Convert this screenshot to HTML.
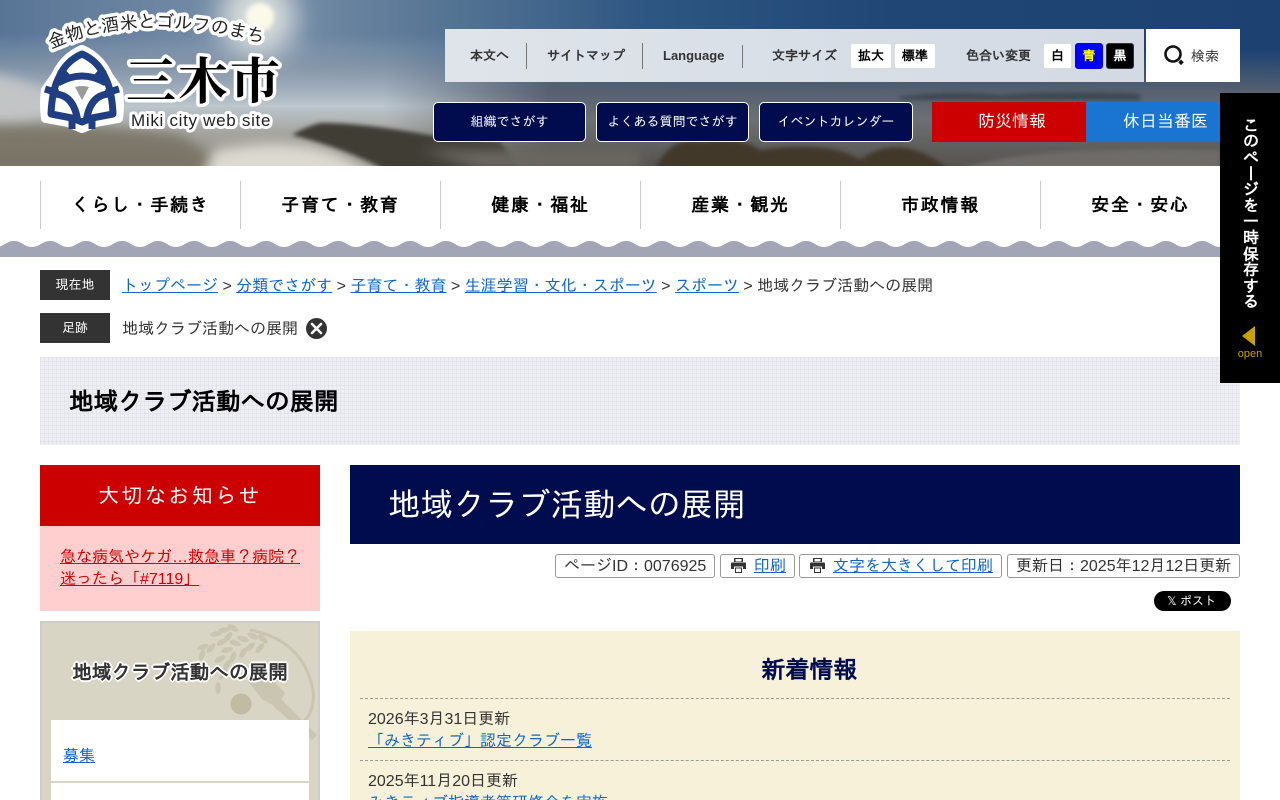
<!DOCTYPE html>
<html lang="ja">
<head>
<meta charset="utf-8">
<title>地域クラブ活動への展開 - 三木市</title>
<style>
*{box-sizing:border-box;margin:0;padding:0}
html,body{width:1280px;height:800px;overflow:hidden;background:#fff}
body{position:relative;font-family:"Liberation Sans","IPAGothic","Noto Sans CJK JP",sans-serif;font-size:16px;color:#333}
a{color:#0f66c8}
.a{position:absolute;white-space:nowrap}
.tb{position:absolute;font-size:13px;font-weight:bold;color:#333;white-space:nowrap;line-height:20px;top:46px}
.sep{position:absolute;top:43px;height:26px;width:1px;background:#777}
.sb{position:absolute;top:43px;height:26px;background:#fff;border:1px solid #ddd;border-radius:3px;font-size:13px;font-weight:bold;color:#000;text-align:center;line-height:24px}
.nb{position:absolute;top:102px;height:40px;background:#000c4e;border:1px solid #fff;border-radius:5px;color:#fff;font-size:13px;text-align:center;line-height:38px}
.nav{position:absolute;top:181px;width:200px;height:48px;border-left:1px solid #ccc;text-align:center;font-size:18px;font-weight:bold;color:#000;line-height:48px;letter-spacing:1.700px}
.lab{position:absolute;left:40px;width:70px;height:30px;background:#333;color:#fff;font-size:13px;text-align:center;line-height:30px}
.info{position:absolute;top:554px;height:24px;border:1px solid #999;border-radius:3px;background:#fff;line-height:24px;white-space:nowrap;font-size:16px}
.dash{position:absolute;left:360px;width:870px;border-top:1px dashed #999}
</style>
</head>
<body>
<svg class="a" style="left:0;top:0" width="1280" height="166" viewBox="0 0 1280 166">
<defs>
<linearGradient id="sky" x1="0" y1="0" x2="1" y2="0">
<stop offset="0" stop-color="#587596"/><stop offset=".2" stop-color="#7a8fa9"/><stop offset=".33" stop-color="#5a7896"/><stop offset=".5" stop-color="#2f5783"/><stop offset=".7" stop-color="#1f4675"/><stop offset="1" stop-color="#1d4272"/>
</linearGradient>
<linearGradient id="vl" x1="0" y1="0" x2="0" y2="1">
<stop offset=".2" stop-color="#9aa9b9" stop-opacity="0"/><stop offset=".5" stop-color="#a3b2c2" stop-opacity=".85"/><stop offset=".64" stop-color="#bcc6cd"/><stop offset=".8" stop-color="#a5a5a0"/><stop offset="1" stop-color="#8f8d84"/>
</linearGradient>
<linearGradient id="vr" x1="0" y1="0" x2="0" y2="1">
<stop offset=".3" stop-color="#55606e" stop-opacity="0"/><stop offset=".55" stop-color="#566070"/><stop offset=".72" stop-color="#6c7074"/><stop offset="1" stop-color="#55534e"/>
</linearGradient>
<linearGradient id="mg" x1="0" y1="0" x2="1" y2="0">
<stop offset=".3" stop-color="#fff"/><stop offset=".43" stop-color="#000"/>
</linearGradient>
<mask id="ml"><rect width="1280" height="166" fill="url(#mg)"/></mask>
<filter id="b1" x="-30%" y="-100%" width="160%" height="300%"><feGaussianBlur stdDeviation="6"/></filter>
<filter id="b2" x="-30%" y="-100%" width="160%" height="300%"><feGaussianBlur stdDeviation="2"/></filter>
<filter id="b3" x="-100%" y="-100%" width="300%" height="300%"><feGaussianBlur stdDeviation="14"/></filter>
</defs>
<rect width="1280" height="166" fill="url(#sky)"/>
<rect width="1280" height="166" fill="url(#vr)"/>
<rect width="1280" height="166" fill="url(#vl)" mask="url(#ml)"/>
<circle cx="258" cy="18" r="38" fill="#e4e7e2" opacity=".9" filter="url(#b3)"/>
<circle cx="260" cy="17" r="14" fill="#fbf9e8" filter="url(#b2)"/>
<path d="M-20 72 Q30 78 70 105 L20 125 H-20Z" fill="#c2c5c6" filter="url(#b1)"/>
<path d="M-20 125 Q80 120 180 135 Q210 150 225 180 H-20Z" fill="#746e5e" opacity=".8" filter="url(#b1)"/>
<path d="M215 150 Q290 135 340 155 L390 180 H200Z" fill="#dcdad0" filter="url(#b1)"/>
<path d="M292 135 Q305 127 320 123 Q360 122 440 137 L500 142 L520 170 H385 Q350 150 292 135Z" fill="#3f3c36" filter="url(#b2)"/>
<path d="M420 150 L640 150 V170 H480Z" fill="#6a6860" filter="url(#b1)"/>
<path d="M655 170 Q670 135 700 142 Q740 135 760 150 Q830 140 860 160 Q900 130 950 170Z" fill="#43392a" filter="url(#b2)"/>
<path d="M960 170 Q1020 145 1220 150 V170Z" fill="#6e6c68" filter="url(#b2)"/>
<path d="M900 97 Q950 90 1000 95 Q1060 90 1140 94 L1140 100 H900Z" fill="#3d4650" filter="url(#b2)"/>

<!-- emblem -->
<path d="M82 50 Q100 58 108 76 L118 90 Q120 104 118 118 L96 122 L82 128 L68 122 L46 118 Q44 104 46 90 L56 76 Q64 58 82 50Z" fill="#fff" stroke="#fff" stroke-width="10" stroke-linejoin="round"/>
<g fill="none" stroke="#1f3f82" stroke-width="7" stroke-linejoin="round">
<path d="M82 54 Q98 61 105 77 Q112 90 113 114 L92 118 L82 122 L72 118 L51 114 Q52 90 59 77 Q66 61 82 54Z"/>
<path d="M58 83 Q82 69 106 83"/>
<path d="M54 94 Q74 94 78 122"/>
<path d="M110 94 Q90 94 86 122"/>
<path d="M60 69 L68 78M104 69 L96 78M45 89 L58 93M119 89 L106 93M72 118 V129M92 118 V129"/>
</g>
<path fill="#9a9a9a" d="M75 87 Q82 85 89 87 L82 100Z"/>

<!-- logo text -->
<defs><path id="tag" d="M51 49 Q105 25 165 28 Q222 30 270 46"/></defs>
<text font-family="'IPAGothic','Noto Sans CJK JP',sans-serif" font-size="18" fill="#222" stroke="#fff" stroke-width="7" stroke-linejoin="round" paint-order="stroke"><textPath href="#tag">金物と酒米とゴルフのまち</textPath></text>
<text x="126" y="99" font-family="'Noto Serif CJK SC',serif" font-weight="700" font-size="50" letter-spacing="2" fill="#000" stroke="#fff" stroke-width="7" stroke-linejoin="round" paint-order="stroke">三木市</text>
<text x="131" y="126" font-family="'Liberation Sans',sans-serif" font-size="17" letter-spacing=".7" fill="#222" stroke="#fff" stroke-width="6" stroke-linejoin="round" paint-order="stroke">Miki city web site</text>
</svg>

<div class="a" style="left:445px;top:29px;width:699px;height:53px;background:linear-gradient(90deg,#dfe4ea,#d3dae4)"></div>
<div class="a" style="left:1146px;top:29px;width:94px;height:53px;background:#fff"></div>
<span class="tb" style="left:470px">本文へ</span><i class="sep" style="left:526px"></i>
<span class="tb" style="left:547px">サイトマップ</span><i class="sep" style="left:642px"></i>
<span class="tb" style="left:663px">Language</span><i class="sep" style="left:742px;top:45px;height:23px"></i>
<span class="tb" style="left:772px">文字サイズ</span>
<span class="sb" style="left:850px;width:42px">拡大</span>
<span class="sb" style="left:894px;width:42px">標準</span>
<span class="tb" style="left:966px">色合い変更</span>
<span class="sb" style="left:1043px;width:29px">白</span>
<span class="sb" style="left:1075px;width:28px;background:#00f;color:#ff0;border-color:#00f">青</span>
<span class="sb" style="left:1106px;width:28px;background:#000;color:#fff;border-color:#333">黒</span>
<svg class="a" style="left:1162px;top:44px" width="24" height="24" viewBox="0 0 24 24"><circle cx="11" cy="10" r="7.500" fill="none" stroke="#111" stroke-width="2.600"/><path d="M19 15.500l2.800 2.800-2.800 2.800-2.800-2.800z" fill="#111"/></svg>
<span class="a" style="left:1191px;top:46px;font-size:14px;line-height:20px;color:#333">検索</span>

<div class="nb" style="left:433px;width:153px">組織でさがす</div>
<div class="nb" style="left:596px;width:153px">よくある質問でさがす</div>
<div class="nb" style="left:759px;width:154px">イベントカレンダー</div>
<div class="a" style="left:932px;top:102px;width:154px;height:40px;background:#cc0000;color:#fff;font-size:17px;line-height:40px;padding-left:46px">防災情報</div>
<div class="a" style="left:1086px;top:102px;width:154px;height:40px;background:#1a75d2;color:#fff;font-size:17px;line-height:40px;padding-left:37px">休日当番医</div>

<div class="nav" style="left:40px">くらし・手続き</div>
<div class="nav" style="left:240px">子育て・教育</div>
<div class="nav" style="left:440px">健康・福祉</div>
<div class="nav" style="left:640px">産業・観光</div>
<div class="nav" style="left:840px">市政情報</div>
<div class="nav" style="left:1040px">安全・安心</div>

<svg class="a" style="left:0;top:240px" width="1280" height="17" viewBox="0 0 1280 17"><defs><pattern id="w" x="-4" y="0" width="36" height="17" patternUnits="userSpaceOnUse"><path fill="#a2a5b5" d="M0 7 C8 7 10 1 18 1 C26 1 28 7 36 7 V17 H0Z"/></pattern></defs><rect width="1280" height="17" fill="url(#w)"/></svg>

<div class="lab" style="top:270px">現在地</div>
<div class="a" style="left:122px;top:276px;line-height:22px"><a href="#">トップページ</a> &gt; <a href="#">分類でさがす</a> &gt; <a href="#">子育て・教育</a> &gt; <a href="#">生涯学習・文化・スポーツ</a> &gt; <a href="#">スポーツ</a> &gt; 地域クラブ活動への展開</div>
<div class="lab" style="top:313px">足跡</div>
<div class="a" style="left:122px;top:319px;line-height:22px">地域クラブ活動への展開</div>
<svg class="a" style="left:306px;top:318px" width="21" height="21" viewBox="0 0 21 21"><circle cx="10.500" cy="10.500" r="10.500" fill="#333"/><path d="M6 6l9 9M15 6l-9 9" stroke="#fff" stroke-width="2.600" stroke-linecap="round"/></svg>

<div class="a" style="left:40px;top:357px;width:1200px;height:88px;background-color:#eeeef3;background-image:linear-gradient(#e4e4ec 1px,transparent 1px),linear-gradient(90deg,#e4e4ec 1px,transparent 1px);background-size:4px 4px"></div>
<div class="a" style="left:69px;top:386px;font-size:24.500px;font-weight:bold;color:#000;line-height:34px">地域クラブ活動への展開</div>

<div class="a" style="left:40px;top:465px;width:280px;height:61px;background:#cc0000;color:#fff;font-size:21px;text-align:center;line-height:63px;letter-spacing:2.400px">大切なお知らせ</div>
<div class="a" style="left:40px;top:526px;width:280px;height:85px;background:#ffcfcf;padding:21px 20px 0;line-height:22px;white-space:normal"><a href="#" style="color:#cc0000">急な病気やケガ…救急車？病院？迷ったら「#7119」</a></div>

<div class="a" style="left:40px;top:621px;width:280px;height:179px;background:#d8d5c5;border:2px solid #ccc;border-bottom:0;overflow:hidden">
<svg class="a" style="left:-1px;top:-1px" width="280" height="179" viewBox="0 0 280 179"><g fill="#c9c5b1">
<path d="M209 8 Q262 18 272 68 Q274 90 262 100" fill="none" stroke="#c9c5b1" stroke-width="3"/>
<ellipse cx="192" cy="6" rx="6" ry="2.700" transform="rotate(30 192 6)"/><ellipse cx="183" cy="8" rx="6" ry="2.700" transform="rotate(-10 183 8)"/><ellipse cx="175" cy="12" rx="6" ry="2.700" transform="rotate(-10 175 12)"/><ellipse cx="187" cy="15" rx="6" ry="2.700" transform="rotate(-50 187 15)"/><ellipse cx="212" cy="14" rx="6" ry="2.700" transform="rotate(25 212 14)"/><ellipse cx="222" cy="17" rx="6" ry="2.700" transform="rotate(45 222 17)"/><ellipse cx="202" cy="17" rx="6" ry="2.700" transform="rotate(20 202 17)"/><ellipse cx="194" cy="21" rx="6" ry="2.700" transform="rotate(20 194 21)"/><ellipse cx="181" cy="20" rx="6" ry="2.700" transform="rotate(-30 181 20)"/><ellipse cx="162" cy="25" rx="6" ry="2.700" transform="rotate(-20 162 25)"/><ellipse cx="170" cy="26" rx="6" ry="2.700" transform="rotate(-50 170 26)"/><ellipse cx="186" cy="28" rx="6" ry="2.700" transform="rotate(-10 186 28)"/><ellipse cx="209" cy="25" rx="6" ry="2.700" transform="rotate(-40 209 25)"/><ellipse cx="219" cy="26" rx="6" ry="2.700" transform="rotate(-50 219 26)"/><ellipse cx="161" cy="33" rx="6" ry="2.700" transform="rotate(-70 161 33)"/><ellipse cx="179" cy="37" rx="6" ry="2.700" transform="rotate(-30 179 37)"/><ellipse cx="192" cy="35" rx="6" ry="2.700" transform="rotate(-70 192 35)"/><ellipse cx="202" cy="31" rx="6" ry="2.700" transform="rotate(-60 202 31)"/><ellipse cx="186" cy="43" rx="6" ry="2.700" transform="rotate(-60 186 43)"/><ellipse cx="177" cy="66" rx="2.700" ry="6"/><ellipse cx="182" cy="52" rx="2.700" ry="6" transform="rotate(30 182 52)"/>
<path d="M207 60 L229 56 L244 71 L236 85 L222 78Z"/><path d="M239 76 L276 113 L271 118 L232 84Z"/></g>
<circle cx="200" cy="82" r="10.500" fill="#bfbba5"/></svg>
<div class="a" style="left:-1px;top:37px;width:278px;text-align:center;font-size:19.600px;font-weight:bold;color:#333;line-height:26px;text-shadow:-2px 0 0 #fff,2px 0 0 #fff,0 -2px 0 #fff,0 2px 0 #fff,-1px -1px 0 #fff,1px 1px 0 #fff,-1px 1px 0 #fff,1px -1px 0 #fff">地域クラブ活動への展開</div>
<div class="a" style="left:9px;top:97px;width:258px;height:61px;background:#fff;padding:26px 12px 0;line-height:22px"><a href="#">募集</a></div>
<div class="a" style="left:9px;top:160px;width:258px;height:40px;background:#fff"></div>
</div>

<div class="a" style="left:350px;top:465px;width:890px;height:79px;background:#000c4e;color:#fff;font-size:32.500px;line-height:81px;padding-left:38px">地域クラブ活動への展開</div>

<div class="info" style="left:555px;width:160px;padding-left:8px">ページID：0076925</div>
<div class="info" style="left:720px;width:75px;padding-left:33px"><a href="#">印刷</a></div>
<div class="info" style="left:799px;width:203px;padding-left:33px"><a href="#">文字を大きくして印刷</a></div>
<div class="info" style="left:1007px;width:233px;padding-left:8px">更新日：2025年12月12日更新</div>
<svg class="a" style="left:730px;top:557px" width="17" height="17" viewBox="0 0 17 17"><path fill="#333" d="M4 1h9v4H4zM2 5.500h13a1 1 0 0 1 1 1V12h-3V9.500H4V12H1V6.500a1 1 0 0 1 1-1zM5 10.500h7V16H5z"/><path fill="#fff" d="M5.500 2h6v2.500h-6zM6 11.500h5V15H6z"/></svg>
<svg class="a" style="left:809px;top:557px" width="17" height="17" viewBox="0 0 17 17"><path fill="#333" d="M4 1h9v4H4zM2 5.500h13a1 1 0 0 1 1 1V12h-3V9.500H4V12H1V6.500a1 1 0 0 1 1-1zM5 10.500h7V16H5z"/><path fill="#fff" d="M5.500 2h6v2.500h-6zM6 11.500h5V15H6z"/></svg>

<div class="a" style="left:1154px;top:591px;width:77px;height:20px;background:#000;border-radius:10px;color:#fff;font-size:12px;line-height:20px;padding-left:13px">𝕏 ポスト</div>

<div class="a" style="left:350px;top:631px;width:890px;height:169px;background:#f7f1da"></div>
<div class="a" style="left:350px;top:654px;width:919px;text-align:center;font-size:24px;font-weight:bold;color:#000c4e;line-height:34px">新着情報</div>
<div class="dash" style="top:698px"></div>
<div class="a" style="left:368px;top:709px;line-height:22px">2026年3月31日更新</div>
<div class="a" style="left:368px;top:731px;line-height:22px"><a href="#">「みきティブ」認定クラブ一覧</a></div>
<div class="dash" style="top:760px"></div>
<div class="a" style="left:368px;top:771px;line-height:22px">2025年11月20日更新</div>
<div class="a" style="left:368px;top:793px;line-height:22px"><a href="#">みきティブ指導者等研修会を実施</a></div>

<div class="a" style="left:1220px;top:93px;width:60px;height:290px;background:#000"></div>
<div class="a" style="left:1239px;top:116px;width:20px;height:200px;writing-mode:vertical-rl;font-size:16px;font-weight:bold;color:#fff;line-height:20px">このページを一時保存する</div>
<svg class="a" style="left:1241px;top:326px" width="15" height="20" viewBox="0 0 15 20"><path d="M14 0V20L1 10Z" fill="#c9a100"/></svg>
<div class="a" style="left:1220px;top:347px;width:60px;text-align:center;font-size:11px;color:#c9a100;line-height:14px">open</div>
</body>
</html>
